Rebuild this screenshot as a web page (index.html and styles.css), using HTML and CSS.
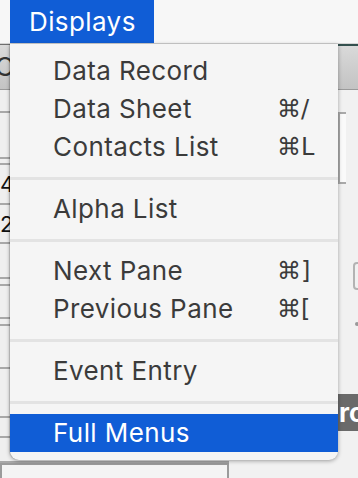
FILE: index.html
```html
<!DOCTYPE html>
<html lang="en">
<head>
  <meta charset="UTF-8" />
  <meta name="viewport" content="width=device-width, initial-scale=1.0" />
  <title>Displays Menu</title>
  <link rel="stylesheet" href="styles.css">
</head>
<body>
  <div class="screen">
    <!-- Menu bar -->
    <div class="menubar">
      <div class="menu-title">Displays</div>
    </div>

    <!-- Window behind the menu -->
    <div class="window">
      <div class="window-head">
        <div class="head-left">Co</div>
        <div class="head-right"></div>
      </div>
      <div class="window-body">
        <div class="list">
          <div class="row" style="height:23px"></div>
          <div class="row" style="height:46px"></div>
          <div class="row" style="height:6px"></div>
          <div class="row num" style="height:40px">4</div>
          <div class="row num" style="height:39px">2</div>
          <div class="row" style="height:35px"></div>
          <div class="row" style="height:7px"></div>
          <div class="row" style="height:33px"></div>
          <div class="row" style="height:7px"></div>
          <div class="row" style="height:43px"></div>
          <div class="row" style="height:49px"></div>
          <div class="row" style="height:20px"></div>
          <div class="row" style="height:25px"></div>
          <div class="field-box"></div>
        </div>
        <div class="side">
          <div class="side-field"></div>
          <div class="side-icon"></div>
          <div class="side-dot"></div>
          <div class="side-bar">ro</div>
        </div>
      </div>
    </div>

    <!-- Open menu -->
    <div class="menu">
      <div class="item"><span>Data Record</span><span class="key"></span></div>
      <div class="item"><span>Data Sheet</span><span class="key">⌘/</span></div>
      <div class="item"><span>Contacts List</span><span class="key">⌘L</span></div>
      <div class="sep"></div>
      <div class="item"><span>Alpha List</span><span class="key"></span></div>
      <div class="sep"></div>
      <div class="item"><span>Next Pane</span><span class="key">⌘]</span></div>
      <div class="item"><span>Previous Pane</span><span class="key">⌘[</span></div>
      <div class="sep"></div>
      <div class="item"><span>Event Entry</span><span class="key"></span></div>
      <div class="sep"></div>
      <div class="item selected"><span>Full Menus</span><span class="key"></span></div>
    </div>
  </div>
</body>
</html>
```

FILE: styles.css
```css
/* Base */
body {
  margin: 0;
  font-family: Inter, "Noto Sans", "DejaVu Sans", sans-serif;
  background: #ececec;
}
.screen {
  position: relative;
  width: 358px;
  height: 478px;
  overflow: hidden;
  background: #ededed;
}

/* Menu bar */
.menubar {
  height: 43px;
  padding-left: 10px;
  background: #f7f7f7;
  border-bottom: 1px solid #d4d4d4;
}
.menu-title {
  width: 125px;
  height: 43px;
  padding-left: 19px;
  line-height: 43px;
  font-size: 26px;
  letter-spacing: 0.4px;
  color: #fff;
  background: #105dd6;
}

/* Window behind */
.window-head {
  display: flex;
  height: 44px;
  border-top: 1px solid #6e6e6e;
  background: linear-gradient(#dadada, #c3c3c3);
  border-bottom: 1px solid #9a9a9a;
}
.head-left {
  margin-left: -5px;
  line-height: 44px;
  font-size: 26px;
  color: #333;
}
.head-right {
  margin-left: auto;
  width: 20px;
  border-top: 2px solid #33504e;
  margin-top: -1px;
}
.window-body {
  display: flex;
}
.list {
  flex: none;
  width: 229px;
  background: #efefef;
}
.row {
  box-sizing: border-box;
  border-bottom: 2px solid #a8a8a8;
}
.row.num {
  font-size: 22px;
  line-height: 38px;
  color: #111;
}
.field-box {
  height: 30px;
  border: 2px solid #9b9b9b;
  background: #f4f4f4;
}
.side {
  flex: 1;
  min-width: 0;
  padding-left: 109px;
  background: #f1f1f1;
}
.side-field {
  width: 6px;
  height: 68px;
  margin-top: 22px;
  border: 2px solid #a9a9a9;
  border-right: none;
  background: #fafafa;
}
.side-icon {
  width: 10px;
  height: 24px;
  margin: 78px 0 0 15px;
  border: 2px solid #b3b3b3;
  border-radius: 4px;
}
.side-dot {
  width: 4px;
  height: 4px;
  margin: 32px 0 0 17px;
  border-radius: 50%;
  background: #999;
}
.side-bar {
  height: 37px;
  margin-top: 68px;
  padding-left: 1px;
  line-height: 37px;
  font-size: 26px;
  font-weight: bold;
  color: #fff;
  background: #6a6a6a;
}

/* Dropdown menu */
.menu {
  position: absolute;
  top: 44px;
  left: 10px;
  width: 328px;
  padding: 8px 0;
  background: #f5f5f5;
  border-radius: 0 0 9px 9px;
  box-shadow: 0 1px 4px rgba(0, 0, 0, 0.35), -1px 0 1px rgba(0, 0, 0, 0.15);
}
.item {
  display: grid;
  grid-template-columns: 1fr 61px;
  height: 38px;
  padding-left: 43px;
  line-height: 38px;
  font-size: 26px;
  letter-spacing: 0.4px;
  color: #3b3b3b;
}
.item.selected {
  background: #105dd6;
  color: #fff;
}
.key {
  font-family: "DejaVu Sans", sans-serif;
  font-size: 24px;
  letter-spacing: 0;
}
.sep {
  height: 3px;
  margin: 11px 0 10px;
  background: #e3e3e3;
}
```
